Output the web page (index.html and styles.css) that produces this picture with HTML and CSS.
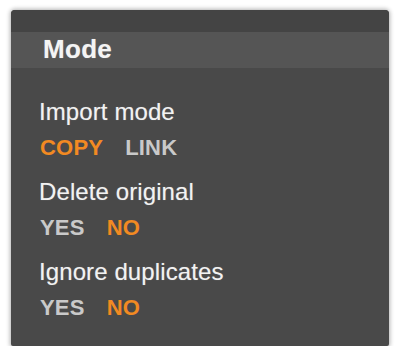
FILE: index.html
```html
<!DOCTYPE html>
<html>
<head>
<meta charset="utf-8">
<link rel="stylesheet" href="styles.css">
</head>
<body>
<div class="panel">
  <div class="strip"></div>
  <div class="header">Mode</div>
  <div class="content">
    <div class="group">
      <div class="label">Import mode</div>
      <div class="options"><span class="opt on">COPY</span><span class="opt">LINK</span></div>
    </div>
    <div class="group">
      <div class="label">Delete original</div>
      <div class="options"><span class="opt">YES</span><span class="opt on">NO</span></div>
    </div>
    <div class="group">
      <div class="label">Ignore duplicates</div>
      <div class="options"><span class="opt">YES</span><span class="opt on">NO</span></div>
    </div>
  </div>
</div>
</body>
</html>
```
FILE: styles.css
```css
html, body {
  margin: 0;
  padding: 0;
  background: #ffffff;
}
body {
  padding: 10px 0 0 11px;
  font-family: "Liberation Sans", Arial, sans-serif;
}
.panel {
  width: 378px;
  height: 336px;
  background: #494949;
  border-radius: 4px 4px 2px 2px;
  box-shadow: 0 0 4px 1px rgba(0, 0, 0, 0.3);
  overflow: hidden;
}
.strip {
  height: 22px;
  background: #444444;
}
.header {
  height: 36px;
  line-height: 34px;
  background: #555555;
  color: #f4f4f4;
  font-weight: bold;
  font-size: 26px;
  padding: 0 0 2px 32px;
  box-sizing: border-box;
  letter-spacing: 0.3px;
  text-shadow: 0 0 1px rgba(255, 255, 255, 0.4);
}
.content {
  padding: 30px 0 0 28px;
  display: flex;
  flex-direction: column;
  gap: 16px;
}
.group {
  display: flex;
  flex-direction: column;
  gap: 8px;
}
.label {
  font-size: 24px;
  line-height: 28px;
  color: #f2f2f2;
  letter-spacing: 0.1px;
  text-shadow: 0 0 1px rgba(255, 255, 255, 0.35);
}
.options {
  display: flex;
  gap: 22px;
  padding-left: 1px;
}
.opt {
  font-size: 22px;
  line-height: 28px;
  font-weight: bold;
  color: #c9c9c9;
  letter-spacing: 0.2px;
}
.opt.on {
  color: #f28a22;
}
```
